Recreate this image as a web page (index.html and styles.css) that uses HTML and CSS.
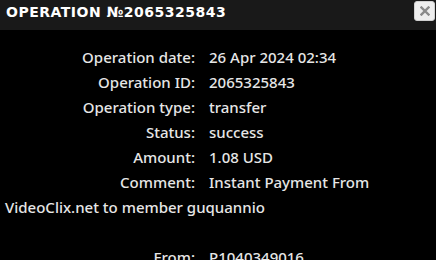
FILE: index.html
```html
<!DOCTYPE html>
<html lang="en">
<head>
    <meta charset="UTF-8">
    <meta name="viewport" content="width=device-width, initial-scale=1.0">
    <title>Operation</title>
    <link rel="stylesheet" href="styles.css">
</head>
<body>
    <div class="header">
        <h2 class="title">OPERATION №2065325843</h2>
        <button class="close" type="button">
            <svg width="10" height="10" viewBox="0 0 10 10">
                <path d="M1.5 1.5 L8.5 8.5 M8.5 1.5 L1.5 8.5" stroke="#8a8a8a" stroke-width="2.4" stroke-linecap="square"/>
            </svg>
        </button>
    </div>
    <div class="details">
        <div class="row"><span class="label">Operation date:</span>26 Apr 2024 02:34</div>
        <div class="row"><span class="label">Operation ID:</span>2065325843</div>
        <div class="row"><span class="label">Operation type:</span>transfer</div>
        <div class="row"><span class="label">Status:</span>success</div>
        <div class="row"><span class="label">Amount:</span>1.08 USD</div>
        <div class="row"><span class="label">Comment:</span>Instant Payment From VideoClix.net to member guquannio</div>
        <div class="row">&nbsp;</div>
        <div class="row"><span class="label">From:</span>P1040349016</div>
        <div class="row"><span class="label">To:</span>U1000000000</div>
    </div>
</body>
</html>
```

FILE: styles.css
```css
body {
    margin: 0;
    background: #000;
    color: #e6e6e6;
    font-family: "Noto Sans", Arial, sans-serif;
}
.header {
    height: 30px;
    background: #191919;
    display: flex;
    align-items: flex-start;
    justify-content: space-between;
}
.title {
    margin: 0;
    padding: 3px 0 0 6px;
    font-family: "DejaVu Sans", sans-serif;
    font-size: 14px;
    font-weight: bold;
    letter-spacing: 0.5px;
    color: #fff;
    line-height: 18px;
}
.close {
    width: 21px;
    height: 20px;
    margin: 1px 1px 0 0;
    padding: 0;
    background: #eeeeee;
    border: 1px solid #d0d0d0;
    border-radius: 3px;
    display: flex;
    align-items: center;
    justify-content: center;
}
.details {
    padding: 15px 5px 0 5px;
    font-size: 15px;
    font-weight: 500;
    line-height: 25px;
}
.label {
    display: inline-block;
    width: 190px;
    text-align: right;
    margin-right: 14px;
}
```
